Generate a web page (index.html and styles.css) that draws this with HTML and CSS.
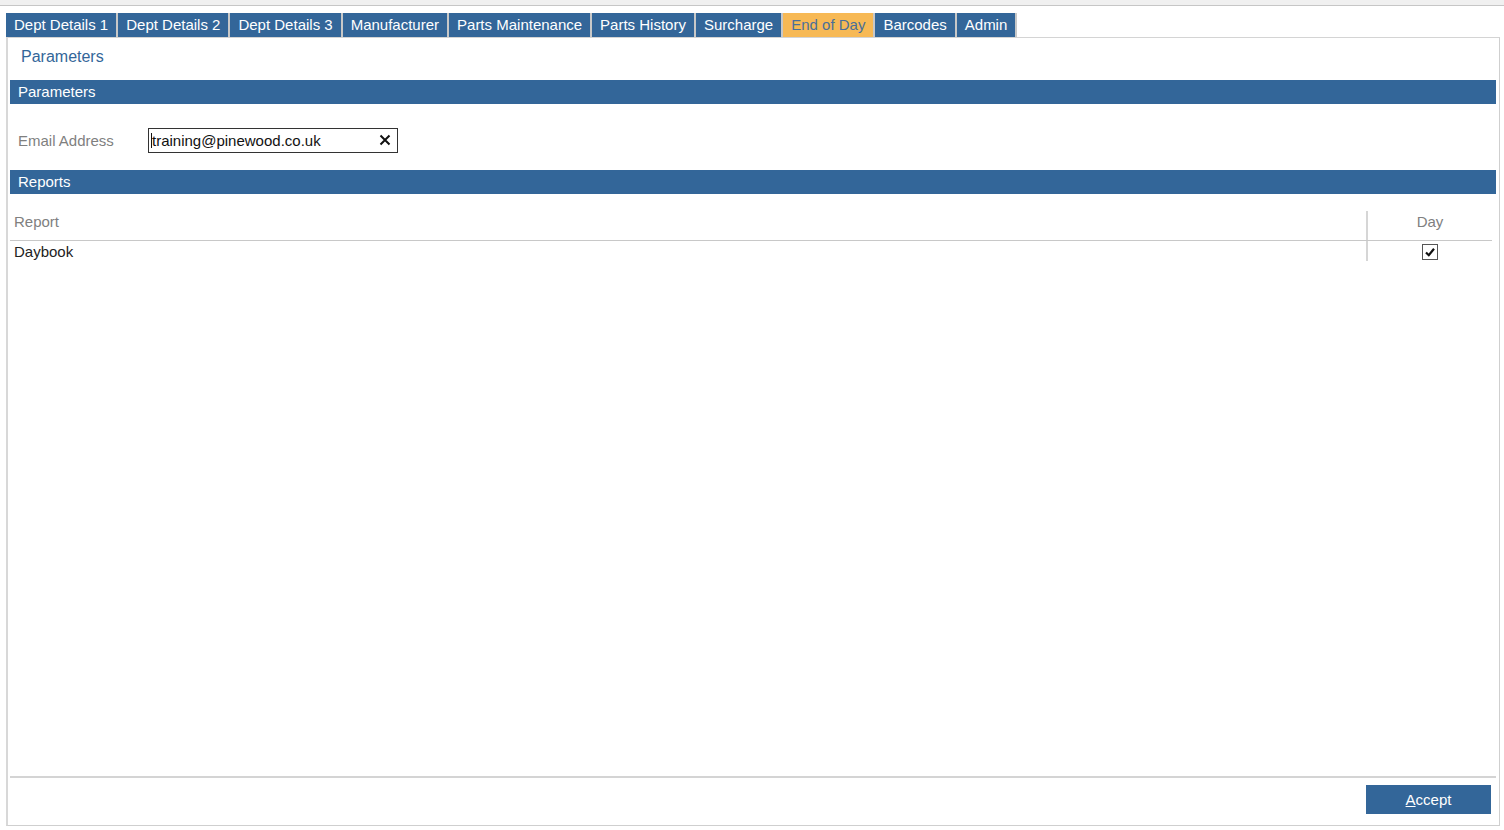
FILE: index.html
```html
<!DOCTYPE html>
<html lang="en">
<head>
  <meta charset="UTF-8">
  <title>End of Day</title>
  <link rel="stylesheet" href="styles.css">
</head>
<body>
  <div class="topstrip"></div>

  <div class="tabs">
    <span class="tab">Dept Details 1</span>
    <span class="tab">Dept Details 2</span>
    <span class="tab">Dept Details 3</span>
    <span class="tab">Manufacturer</span>
    <span class="tab">Parts Maintenance</span>
    <span class="tab">Parts History</span>
    <span class="tab">Surcharge</span>
    <span class="tab activo">End of Day</span>
    <span class="tab">Barcodes</span>
    <span class="tab">Admin</span>
  </div>

  <div class="panel">
    <div class="titulo">Parameters</div>

    <div class="barra">Parameters</div>
    <div class="campo">
      <label>Email Address</label>
      <div class="caja">
        <span class="valor">training@pinewood.co.uk</span>
        <svg width="12" height="12" viewBox="0 0 12 12"><path d="M1.5 1.5 L10.5 10.5 M10.5 1.5 L1.5 10.5" stroke="#111" stroke-width="2"/></svg>
      </div>
    </div>

    <div class="barra">Reports</div>
    <div class="tabla">
      <div class="fila cabecera">
        <div class="col-report">Report</div>
        <div class="col-day">Day</div>
      </div>
      <div class="fila">
        <div class="col-report">Daybook</div>
        <div class="col-day">
          <span class="check"><svg width="12" height="12" viewBox="0 0 12 12"><path d="M2 6.5 L4.8 9.2 L10 2.8" fill="none" stroke="#111" stroke-width="2.2"/></svg></span>
        </div>
      </div>
    </div>

    <div class="pie">
      <button class="aceptar"><u>A</u>ccept</button>
    </div>
  </div>
</body>
</html>
```

FILE: styles.css
```css
body {
  margin: 0;
  padding: 0;
  background: #fff;
  font-family: 'Liberation Sans', sans-serif;
  font-size: 15px;
  color: #222;
  width: 1504px;
  height: 830px;
  overflow: hidden;
}

.topstrip {
  height: 5px;
  background: #f0f0f0;
  border-bottom: 1px solid #c6c6c6;
}

.tabs {
  display: flex;
  margin: 7px 0 0 6px;
  height: 24px;
}

.tab {
  background: #336699;
  color: #fff;
  font-size: 15px;
  line-height: 24px;
  padding: 0 8px;
  border-right: 2px solid #c8c8c8;
  white-space: nowrap;
}

.tab.activo {
  background: #f7b955;
  color: #4a6f9a;
}

.panel {
  box-sizing: border-box;
  margin-left: 6px;
  width: 1494px;
  height: 789px;
  border: 1px solid #cfcfcf;
  border-left: 2px solid #d8d8d8;
  border-top: 1px solid #d4d4d4;
  display: flex;
  flex-direction: column;
  padding: 0 3px 0 2px;
}

.titulo {
  color: #336699;
  font-size: 16px;
  padding: 10px 0 0 11px;
  height: 32px;
}

.barra {
  background: #336699;
  color: #fff;
  height: 24px;
  line-height: 24px;
  padding-left: 8px;
}

.campo {
  display: flex;
  align-items: center;
  height: 60px;
  padding: 6px 0 0 8px;
}

.campo label {
  width: 130px;
  color: #7f7f7f;
}

.caja {
  width: 250px;
  height: 25px;
  border: 1px solid #333;
  display: flex;
  align-items: center;
  justify-content: space-between;
  padding: 0 6px 0 2px;
  box-sizing: border-box;
  color: #111;
}

.valor {
  border-left: 1px solid #111;
  line-height: 15px;
}

.tabla {
  margin: 17px 4px 0 0;
}

.fila {
  display: flex;
}

.fila.cabecera {
  color: #808080;
  border-bottom: 1px solid #c8c8c8;
  height: 29px;
  line-height: 22px;
}

.fila:not(.cabecera) {
  height: 20px;
  line-height: 21px;
}

.col-report {
  flex: 1;
  padding-left: 4px;
  border-right: 2px solid #d6d6d6;
}

.col-day {
  width: 124px;
  display: flex;
  justify-content: center;
  align-items: flex-start;
}

.check {
  margin-top: 3px;
  width: 14px;
  height: 14px;
  border: 1px solid #555;
  display: flex;
  align-items: center;
  justify-content: center;
}

.pie {
  margin-top: auto;
  border-top: 2px solid #d4d4d4;
  height: 47px;
  display: flex;
  justify-content: flex-end;
  align-items: flex-start;
  padding-right: 5px;
}

.aceptar {
  margin-top: 7px;
  width: 125px;
  height: 29px;
  background: #336699;
  color: #fff;
  border: none;
  font-family: 'Liberation Sans', sans-serif;
  font-size: 15px;
  padding: 0;
}
```
